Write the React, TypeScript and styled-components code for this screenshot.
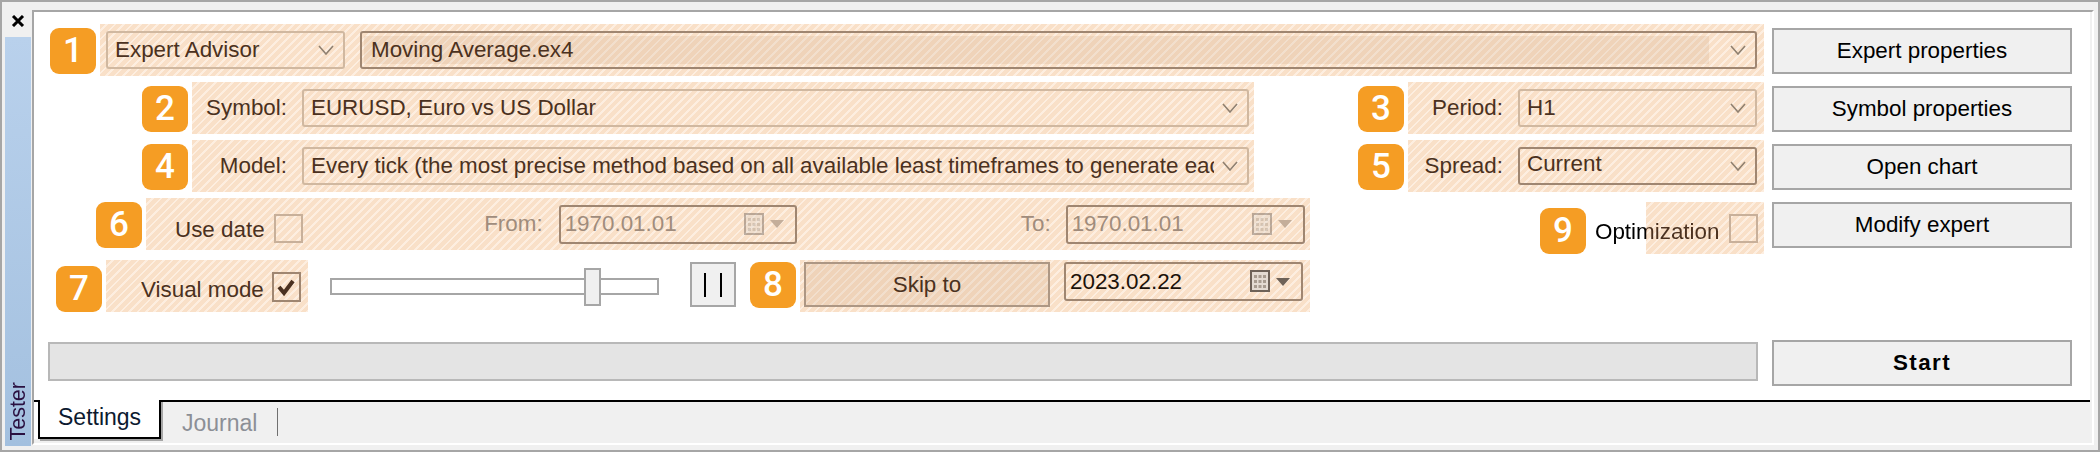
import styled, { createGlobalStyle } from 'styled-components';

const GlobalStyle = createGlobalStyle`
  * { box-sizing: border-box; }
  html, body { margin: 0; padding: 0; background: #fff; }
  body { font-family: "Liberation Sans", Arial, sans-serif; font-size: 22.4px; color: #000; }
`;

const Window = styled.div`
  width: 2100px;
  height: 452px;
  display: flex;
  border: 2px solid #a6a6a6;
  background: #f0f0f0;
  padding: 8px 4px 5px 0;
  overflow: hidden;
`;

const Dock = styled.div`
  width: 30px;
  flex: none;
  margin-bottom: -1px;
  display: flex;
  flex-direction: column;
  align-items: center;
`;

const CloseIcon = styled.svg`
  width: 14px;
  height: 12px;
  margin: 5px 0 10px 2px;
  flex: none;
`;

const DockTab = styled.div`
  flex: 1;
  width: 26px;
  margin-left: 2px;
  background: linear-gradient(180deg, #b9d1ec 0%, #a3c0df 100%);
  display: flex;
  flex-direction: column;
  justify-content: flex-end;
  align-items: center;
  padding-bottom: 5px;
`;

const DockLabel = styled.span`
  writing-mode: vertical-rl;
  transform: rotate(180deg);
  font-size: 21.5px;
  line-height: 26px;
  color: #2a1040;
`;

const Main = styled.div`
  flex: 1;
  display: flex;
  flex-direction: column;
  border-top: 2px solid #a6a6a6;
  border-left: 2px solid #a6a6a6;
  border-right: 2px solid #fff;
  border-bottom: 2px solid #fff;
  padding-right: 2px;
`;

const Panel = styled.div`
  flex: 1;
  background: #fff;
  padding: 12px 0 0 14px;
  display: flex;
  flex-direction: column;
  gap: 6px;
`;

const Row = styled.div<{ $indent?: number; $gap?: number }>`
  display: flex;
  align-items: flex-start;
  margin-left: ${(p) => p.$indent ?? 0}px;
  margin-top: ${(p) => p.$gap ?? 0}px;
`;

const Badge = styled.div<{ $top?: number; $left?: number }>`
  width: 46px;
  height: 46px;
  flex: none;
  margin-top: ${(p) => p.$top ?? 4}px;
  margin-left: ${(p) => p.$left ?? 0}px;
  margin-right: 4px;
  border-radius: 9px;
  background: #f59d24;
  color: #fff;
  font-family: Roboto, "Liberation Sans", sans-serif;
  font-size: 35px;
  font-weight: 500;
  line-height: 46px;
  text-align: center;
`;

const Zone = styled.div<{ $w: number; $pl?: number; $top?: number; $start?: boolean }>`
  width: ${(p) => p.$w}px;
  height: 52px;
  flex: none;
  margin-top: ${(p) => p.$top ?? 0}px;
  display: flex;
  align-items: ${(p) => (p.$start ? 'flex-start' : 'center')};
  padding: 0 7px 0 ${(p) => p.$pl ?? 0}px;
  color: #4b3120;
  background: repeating-linear-gradient(135deg, #f9e0c8 0 4px, #fdeee0 4px 6px);
`;

const FieldLabel = styled.span<{ $w: number; $muted?: boolean }>`
  width: ${(p) => p.$w}px;
  flex: none;
  text-align: right;
  white-space: nowrap;
  color: ${(p) => (p.$muted ? '#a08c7c' : 'inherit')};
`;

const TextLabel = styled.span<{ $top: number; $left?: number }>`
  flex: none;
  white-space: nowrap;
  margin-top: ${(p) => p.$top}px;
  margin-left: ${(p) => p.$left ?? 0}px;
`;

const OptimizationLabel = styled.span`
  width: 125px;
  flex: none;
  margin: 21px -74px 0 5px;
  position: relative;
  z-index: 1;
  line-height: 26px;
  white-space: nowrap;
  background: linear-gradient(90deg, #000 51px, #4b3120 51px);
  -webkit-background-clip: text;
  background-clip: text;
  color: transparent;
`;

const Combo = styled.div<{ $w?: number; $strong?: boolean; $left?: number; $top?: number; $pad?: number; $tall?: number }>`
  width: ${(p) => (p.$w ? `${p.$w}px` : 'auto')};
  flex: ${(p) => (p.$w ? 'none' : '1')};
  min-width: 0;
  height: ${(p) => p.$tall ?? 38}px;
  margin-left: ${(p) => p.$left ?? 0}px;
  margin-top: ${(p) => p.$top ?? 0}px;
  display: flex;
  align-items: center;
  padding: 0 9px 0 ${(p) => p.$pad ?? 7}px;
  border: 2px solid ${(p) => (p.$strong ? '#9f8671' : '#d0b8a0')};
  border-radius: 3px;
`;

const ComboValue = styled.div<{ $raised?: boolean; $band?: boolean; $muted?: boolean; $dark?: boolean; $clip?: number }>`
  flex: 1;
  min-width: 0;
  height: 100%;
  ${(p) => (p.$clip ? `max-width: ${p.$clip}px;` : '')}
  display: flex;
  align-items: center;
  overflow: hidden;
  white-space: nowrap;
  padding-bottom: ${(p) => (p.$raised ? 4 : 0)}px;
  color: ${(p) => (p.$muted ? '#a08c7c' : p.$dark ? '#1c120a' : 'inherit')};
`;

const BandValue = styled.div`
  flex: 1;
  height: 28px;
  margin: 0 13px 0 -5px;
  padding: 0 0 0 7px;
  display: flex;
  align-items: center;
  background: rgba(190, 150, 110, 0.17);
`;

const Chevron = styled.svg`
  width: 16px;
  height: 10px;
  flex: none;
  margin-left: 8px;
`;

const CalendarIcon = styled.svg<{ $muted?: boolean }>`
  width: 22px;
  height: 23px;
  flex: none;
  opacity: ${(p) => (p.$muted ? 0.45 : 1)};
`;

const CalendarArrow = styled.div<{ $muted?: boolean }>`
  width: 0;
  height: 0;
  flex: none;
  margin: 0 2px 0 4px;
  border-left: 7px solid transparent;
  border-right: 7px solid transparent;
  border-top: 8px solid ${(p) => (p.$muted ? '#c4ae9a' : '#6e6258')};
`;

const CheckBox = styled.div<{ $top: number; $strong?: boolean; $left?: number; $h?: number }>`
  width: 29px;
  height: ${(p) => p.$h ?? 29}px;
  flex: none;
  margin-top: ${(p) => p.$top}px;
  margin-left: ${(p) => p.$left ?? 0}px;
  display: flex;
  align-items: center;
  justify-content: center;
  border: 2px solid ${(p) => (p.$strong ? '#9f8671' : '#c8b09a')};
`;

const Button = styled.button<{ $top?: number; $left?: number; $bold?: boolean }>`
  width: 300px;
  height: 46px;
  flex: none;
  margin: ${(p) => p.$top ?? 4}px 0 0 ${(p) => p.$left ?? 8}px;
  padding: 0;
  border: 2px solid #a6a6a6;
  border-radius: 0;
  background: #f0f0f0;
  color: #000;
  font-family: inherit;
  font-size: 22.4px;
  font-weight: ${(p) => (p.$bold ? 700 : 400)};
  letter-spacing: ${(p) => (p.$bold ? '1.4px' : 0)};
`;

const SkipButton = styled.button`
  width: 246px;
  height: 45px;
  flex: none;
  margin: 2px 0 0 4px;
  padding: 0;
  border: 2px solid #ad9784;
  background: rgba(190, 150, 110, 0.17);
  color: #4b3120;
  font-family: inherit;
  font-size: 22.4px;
`;

const Slider = styled.div`
  width: 329px;
  height: 17px;
  flex: none;
  margin: 18px 0 0 22px;
  position: relative;
  border: 2px solid #a6a6a6;
  background: #fff;
`;

const SliderThumb = styled.div`
  position: absolute;
  left: 252px;
  top: -12px;
  width: 17px;
  height: 38px;
  border: 2px solid #a6a6a6;
  background: #f0f0f0;
`;

const PauseButton = styled.div`
  width: 46px;
  height: 45px;
  flex: none;
  margin: 2px 0 0 31px;
  display: flex;
  align-items: center;
  justify-content: center;
  gap: 14px;
  border: 2px solid #a6a6a6;
  background: #f0f0f0;
`;

const PauseBar = styled.span`
  width: 2px;
  height: 24px;
  background: #000;
`;

const ProgressBar = styled.div`
  width: 1710px;
  height: 39px;
  flex: none;
  margin-top: 2px;
  border: 2px solid #b8b8b8;
  background: #e4e4e4;
`;

const TabStrip = styled.div`
  height: 43px;
  flex: none;
  display: flex;
  background: #f0f0f0;
`;

const TabStub = styled.div`
  width: 4px;
  flex: none;
  background: #fff;
  box-shadow: inset 0 2px 0 #000;
  height: 39px;
`;

const ActiveTab = styled.div`
  width: 123px;
  height: 39px;
  flex: none;
  border: 2px solid #000;
  border-top: none;
  background: #fff;
  box-shadow: 2px 2px 0 #a6a6a6;
  display: flex;
  align-items: center;
  padding: 0 0 3px 18px;
  font-size: 23px;
  color: #0c1a30;
`;

const TabRest = styled.div`
  flex: 1;
  border-top: 2px solid #000;
  display: flex;
  align-items: flex-start;
  padding: 6px 0 0 21px;
`;

const IdleTab = styled.span`
  font-size: 23px;
  line-height: 30px;
  color: #8c8f96;
`;

const TabDivider = styled.span`
  width: 1px;
  height: 28px;
  margin-left: 20px;
  background: #707070;
`;

const Arrow = () => (
  <Chevron viewBox="0 0 16 10">
    <polyline points="1,1 8,9 15,1" fill="none" stroke="#8f8070" strokeWidth="1.6" />
  </Chevron>
);

const Calendar = ({ muted }: { muted?: boolean }) => (
  <CalendarIcon $muted={muted} viewBox="0 0 22 23">
    <rect x="2" y="2" width="18" height="20" fill="#000" opacity="0.18" />
    <rect x="1" y="1" width="18" height="20" fill="#e4dbd2" stroke="#6e6258" strokeWidth="2" />
    <g fill="#a89c90">
      <rect x="4" y="5" width="3" height="3" />
      <rect x="8.5" y="5" width="3" height="3" />
      <rect x="13" y="5" width="3" height="3" />
      <rect x="4" y="10" width="3" height="3" />
      <rect x="8.5" y="10" width="3" height="3" />
      <rect x="13" y="10" width="3" height="3" />
      <rect x="4" y="15" width="3" height="3" />
      <rect x="8.5" y="15" width="3" height="3" />
      <rect x="13" y="15" width="3" height="3" />
    </g>
  </CalendarIcon>
);

const DateCombo = ({ value, muted, w, left, top }: { value: string; muted?: boolean; w: number; left: number; top?: number }) => (
  <Combo $w={w} $strong $left={left} $top={top} $tall={39} $pad={4}>
    <ComboValue $muted={muted} $dark={!muted}>{value}</ComboValue>
    <Calendar muted={muted} />
    <CalendarArrow $muted={muted} />
  </Combo>
);

export default function App() {
  return (
    <>
      <GlobalStyle />
      <Window>
        <Dock>
          <CloseIcon viewBox="0 0 14 12">
            <path d="M2 1 L12 11 M12 1 L2 11" stroke="#000" strokeWidth="3" />
          </CloseIcon>
          <DockTab>
            <DockLabel>Tester</DockLabel>
          </DockTab>
        </Dock>
        <Main>
          <Panel>
            <Row $indent={2}>
              <Badge>1</Badge>
              <Zone $w={1664} $pl={6}>
                <Combo $w={239} $pad={7}>
                  <ComboValue>Expert Advisor</ComboValue>
                  <Arrow />
                </Combo>
                <Combo $strong $left={15}>
                  <BandValue>Moving Average.ex4</BandValue>
                  <Arrow />
                </Combo>
              </Zone>
              <Button>Expert properties</Button>
            </Row>

            <Row $indent={94}>
              <Badge>2</Badge>
              <Zone $w={1062}>
                <FieldLabel $w={95}>Symbol:</FieldLabel>
                <Combo $w={947} $left={15}>
                  <ComboValue>EURUSD, Euro vs US Dollar</ComboValue>
                  <Arrow />
                </Combo>
              </Zone>
              <Badge $left={104}>3</Badge>
              <Zone $w={356}>
                <FieldLabel $w={95}>Period:</FieldLabel>
                <Combo $w={239} $left={15}>
                  <ComboValue>H1</ComboValue>
                  <Arrow />
                </Combo>
              </Zone>
              <Button>Symbol properties</Button>
            </Row>

            <Row $indent={94}>
              <Badge>4</Badge>
              <Zone $w={1062}>
                <FieldLabel $w={95}>Model:</FieldLabel>
                <Combo $w={947} $left={15}>
                  <ComboValue>Every tick (the most precise method based on all available least timeframes to generate each tick)</ComboValue>
                  <Arrow />
                </Combo>
              </Zone>
              <Badge $left={104}>5</Badge>
              <Zone $w={356}>
                <FieldLabel $w={95}>Spread:</FieldLabel>
                <Combo $w={239} $left={15} $strong>
                  <ComboValue $raised>Current</ComboValue>
                  <Arrow />
                </Combo>
              </Zone>
              <Button>Open chart</Button>
            </Row>

            <Row $indent={48}>
              <Badge>6</Badge>
              <Zone $w={1164} $pl={29}>
                <TextLabel $top={12}>Use date</TextLabel>
                <CheckBox $top={9} $left={9} />
                <FieldLabel $w={240} $muted>From:</FieldLabel>
                <DateCombo value="1970.01.01" muted w={238} left={16} />
                <FieldLabel $w={254} $muted>To:</FieldLabel>
                <DateCombo value="1970.01.01" muted w={239} left={15} />
              </Zone>
              <Badge $left={230} $top={10}>9</Badge>
              <OptimizationLabel>Optimization</OptimizationLabel>
              <Zone $w={118} $top={4} $pl={83}>
                <CheckBox $top={0} />
              </Zone>
              <Button>Modify expert</Button>
            </Row>

            <Row $indent={8}>
              <Badge $top={6}>7</Badge>
              <Zone $w={202} $pl={35}>
                <TextLabel $top={8}>Visual mode</TextLabel>
                <CheckBox $top={2} $left={8} $h={30} $strong>
                  <svg width="19" height="17" viewBox="0 0 19 17">
                    <path d="M2 8 L7 14 L16 2" fill="none" stroke="#4b3120" strokeWidth="4" />
                  </svg>
                </CheckBox>
              </Zone>
              <Slider>
                <SliderThumb />
              </Slider>
              <PauseButton>
                <PauseBar />
                <PauseBar />
              </PauseButton>
              <Badge $left={14} $top={2}>8</Badge>
              <Zone $w={510} $start>
                <SkipButton>Skip to</SkipButton>
                <DateCombo value="2023.02.22" w={239} left={14} top={2} />
              </Zone>
            </Row>

            <Row $gap={22}>
              <ProgressBar />
              <Button $top={0} $left={14} $bold>Start</Button>
            </Row>
          </Panel>
          <TabStrip>
            <TabStub />
            <ActiveTab>Settings</ActiveTab>
            <TabRest>
              <IdleTab>Journal</IdleTab>
              <TabDivider />
            </TabRest>
          </TabStrip>
        </Main>
      </Window>
    </>
  );
}
